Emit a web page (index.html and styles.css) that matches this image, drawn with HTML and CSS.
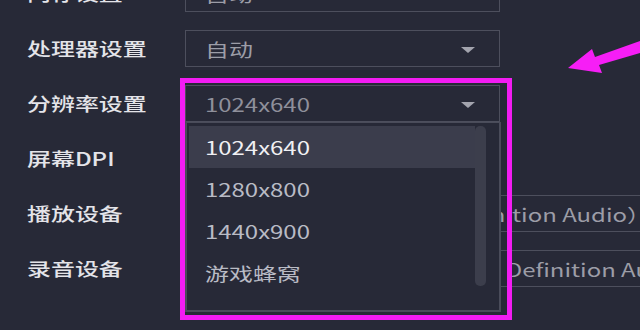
FILE: index.html
```html
<!DOCTYPE html>
<html lang="zh-CN">
<head>
<meta charset="utf-8">
<title>设置</title>
<link rel="stylesheet" href="styles.css">
</head>
<body>
<div class="form">
  <div class="row">
    <div class="label"><span class="sx">内存设置</span></div>
    <div class="select"><span class="sx val">自动</span><span class="caret"></span></div>
  </div>
  <div class="row">
    <div class="label"><span class="sx">处理器设置</span></div>
    <div class="select"><span class="sx val">自动</span><span class="caret"></span></div>
  </div>
  <div class="row">
    <div class="label"><span class="sx">分辨率设置</span></div>
    <div class="select open"><span class="sx val">1024x640</span><span class="caret"></span>
      <div class="menu">
        <div class="items">
          <div class="item active"><span class="sx">1024x640</span></div>
          <div class="item"><span class="sx">1280x800</span></div>
          <div class="item"><span class="sx">1440x900</span></div>
          <div class="item"><span class="sx">游戏蜂窝</span></div>
        </div>
        <div class="scroll"><div class="thumb"></div></div>
      </div>
    </div>
  </div>
  <div class="row">
    <div class="label"><span class="sx">屏幕DPI</span></div>
    <div class="select"><span class="sx val">240</span></div>
  </div>
  <div class="row">
    <div class="label"><span class="sx">播放设备</span></div>
    <div class="select wide"><span class="sx val">扬声器（Realtek High Definition Audio）</span></div>
  </div>
  <div class="row">
    <div class="label"><span class="sx">录音设备</span></div>
    <div class="select wide"><span class="sx val">麦克风阵列 (2-Realtek High Definition Audio)</span></div>
  </div>
</div>
<div class="highlight"></div>
<svg class="arrow" width="80" height="40" viewBox="0 0 80 40">
  <polygon points="0,30 24,11 27,19 72,3 72,15 31,27 34,35" fill="#f61ef6"/>
</svg>
</body>
</html>
```
FILE: styles.css
```css
html, body {
  margin: 0;
  padding: 0;
}
body {
  width: 640px;
  height: 330px;
  overflow: hidden;
  background: #272937;
  font-family: "Noto Sans CJK SC", "Noto Sans", sans-serif;
  font-size: 18px;
  position: relative;
}
.sx {
  display: inline-block;
  transform: scaleX(1.33);
  transform-origin: 0 50%;
  white-space: nowrap;
}
.form {
  display: flex;
  flex-direction: column;
  gap: 18px;
  margin-top: -25px;
  padding-left: 27px;
}
.row {
  display: flex;
  align-items: center;
  height: 37px;
}
.label {
  width: 158px;
  flex: none;
  color: #e4e4e9;
  font-weight: 500;
  line-height: 37px;
}
.select {
  position: relative;
  width: 315px;
  height: 37px;
  box-sizing: border-box;
  border: 1px solid #4d4f5d;
  padding-left: 19px;
  display: flex;
  align-items: center;
  color: #9c9da7;
  flex: none;
}
.select.wide {
  width: 600px;
  overflow: hidden;
}
.select.open {
  color: #8f909b;
}
.caret {
  position: absolute;
  right: 24px;
  top: 16px;
  width: 0;
  height: 0;
  border-left: 7px solid transparent;
  border-right: 7px solid transparent;
  border-top: 6px solid #a3a4ae;
}
.menu {
  position: absolute;
  left: -1px;
  top: 36px;
  width: 316px;
  height: 190px;
  box-sizing: border-box;
  border: 2px solid #4a4c5a;
  border-top: 1px solid #4a4c5a;
  background: #272937;
  z-index: 2;
  display: flex;
  padding: 3px 0 0 2px;
}
.items {
  flex: 1;
  display: flex;
  flex-direction: column;
}
.item {
  height: 42px;
  display: flex;
  align-items: center;
  padding-left: 16px;
  color: #b9bbc5;
}
.item.active {
  background: #3b3d4c;
  color: #f0f0f3;
}
.scroll {
  width: 24px;
  flex: none;
  display: flex;
  justify-content: flex-start;
}
.thumb {
  width: 11px;
  height: 160px;
  border-radius: 5px;
  background: #3c3e4c;
}
.highlight {
  position: absolute;
  left: 180px;
  top: 78px;
  width: 332px;
  height: 242px;
  box-sizing: border-box;
  border: 5px solid #f31cf3;
  z-index: 3;
}
.arrow {
  position: absolute;
  left: 568px;
  top: 38px;
}
```
